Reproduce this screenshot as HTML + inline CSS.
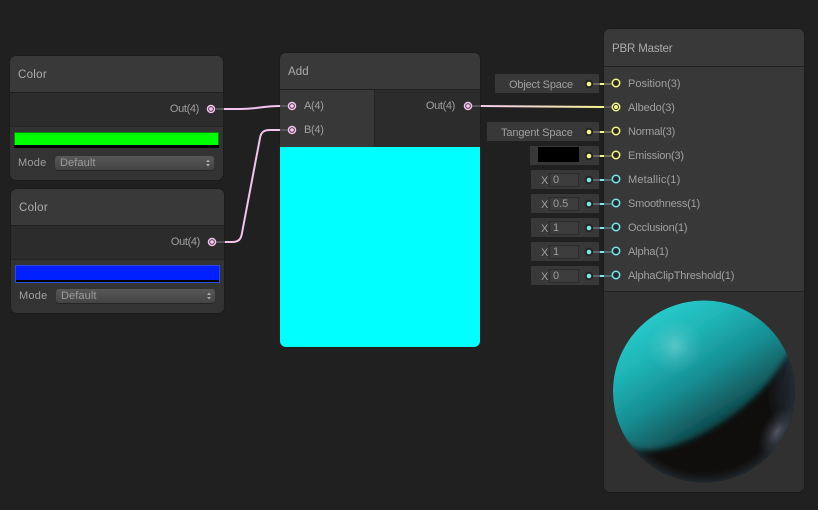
<!DOCTYPE html>
<html><head><meta charset="utf-8"><style>
html,body{margin:0;padding:0;background:#202020;width:818px;height:510px;overflow:hidden}
body{position:relative;font-family:"Liberation Sans",sans-serif;font-size:11px;color:#a0a0a0}
.a{position:absolute}
.node{position:absolute;background:#2c2c2c;border-radius:6px;box-shadow:0 0 0 1px #1c1c1c;overflow:hidden}
.hd{position:absolute;left:0;right:0;top:0;background:#393939;border-bottom:1px solid #1f1f1f;box-sizing:border-box}
.t{position:absolute;white-space:nowrap;line-height:14px;letter-spacing:-.15px}
.dd{position:absolute;height:14px;box-sizing:border-box;border-radius:3px;background:linear-gradient(#585858,#444);box-shadow:0 1px 0 #262626;color:#9c9c9c;padding-left:5px;line-height:15px;font-size:11px;letter-spacing:.1px}
.chip{position:absolute;background:#383838;height:19px}
.inp{position:absolute;background:#3c3c3c;border:1px solid #2c2c2c;box-sizing:border-box;height:14px;width:30px;color:#9c9c9c;line-height:13px;padding-left:3px}
.ttl{font-size:11.5px;color:#acacac;letter-spacing:-.1px}
</style></head><body>

<div class="node" style="left:10px;top:56px;width:213px;height:124px;background:#333">
 <div class="hd" style="height:37px"></div>
 <div class="a" style="left:0;right:0;top:37px;height:33px;background:#2c2c2c;border-bottom:1px solid #252525"></div>
 <div class="t ttl" style="left:8px;top:12px;letter-spacing:.3px">Color</div>
 <div class="t" style="right:24px;top:46px;letter-spacing:-.35px">Out(4)</div>
 <div class="a" style="left:4px;top:76px;width:205px;height:14px;background:#00ff00;box-sizing:border-box;border:1px solid #0a8a0a;border-bottom:0"></div>
 <div class="a" style="left:4px;top:89px;width:205px;height:3px;background:#000"></div>
 <div class="t" style="left:8px;top:100px;letter-spacing:.25px">Mode</div>
 <div class="dd" style="left:45px;top:100px;width:159px">Default</div>
 <svg class="a" style="left:194px;top:102px" width="8" height="10"><path d="M4 1.500L6 4H2zM4 8.500L6 6H2z" fill="#aaa"/></svg>
</div>

<div class="node" style="left:11px;top:189px;width:213px;height:124px;background:#333">
 <div class="hd" style="height:37px"></div>
 <div class="a" style="left:0;right:0;top:37px;height:33px;background:#2c2c2c;border-bottom:1px solid #252525"></div>
 <div class="t ttl" style="left:8px;top:12px;letter-spacing:.3px">Color</div>
 <div class="t" style="right:24px;top:46px;letter-spacing:-.35px">Out(4)</div>
 <div class="a" style="left:4px;top:76px;width:205px;height:15px;background:#0020ff;box-sizing:border-box;border:1px solid #2a4ae0;border-bottom:0"></div>
 <div class="a" style="left:4px;top:91px;width:203px;height:2px;background:#000;border:solid #2a4ae0;border-width:0 1px 1px"></div>
 <div class="t" style="left:8px;top:100px;letter-spacing:.25px">Mode</div>
 <div class="dd" style="left:45px;top:100px;width:159px">Default</div>
 <svg class="a" style="left:194px;top:102px" width="8" height="10"><path d="M4 1.500L6 4H2zM4 8.500L6 6H2z" fill="#aaa"/></svg>
</div>

<div class="node" style="left:280px;top:53px;width:200px;height:294px">
 <div class="hd" style="height:37px"></div>
 <div class="a" style="left:0;top:37px;width:94px;height:57px;background:#383838;border-right:1px solid #242424"></div>
 <div class="a" style="left:0;top:94px;width:200px;height:200px;background:#00ffff"></div>
 <div class="t ttl" style="left:8px;top:12px;letter-spacing:.1px">Add</div>
 <div class="t" style="left:24px;top:46px;letter-spacing:-.3px">A(4)</div>
 <div class="t" style="left:24px;top:70px;letter-spacing:-.3px">B(4)</div>
 <div class="t" style="right:25px;top:46px;letter-spacing:-.35px">Out(4)</div>
</div>

<div class="node" style="left:604px;top:29px;width:200px;height:463px;background:#303030">
 <div class="hd" style="height:38px"></div>
 <div class="a" style="left:0;right:0;top:38px;height:224px;background:#383838;border-bottom:1px solid #232323"></div>
 <div class="t ttl" style="left:8px;top:13px;letter-spacing:-.15px">PBR Master</div>
 <div class="t" style="left:24px;top:48px;letter-spacing:0">Position(3)</div>
 <div class="t" style="left:24px;top:72px;letter-spacing:-.1px">Albedo(3)</div>
 <div class="t" style="left:24px;top:96px;letter-spacing:-.2px">Normal(3)</div>
 <div class="t" style="left:24px;top:120px;letter-spacing:-.2px">Emission(3)</div>
 <div class="t" style="left:24px;top:144px;letter-spacing:.15px">Metallic(1)</div>
 <div class="t" style="left:24px;top:168px;letter-spacing:-.2px">Smoothness(1)</div>
 <div class="t" style="left:24px;top:192px;letter-spacing:-.2px">Occlusion(1)</div>
 <div class="t" style="left:24px;top:216px;letter-spacing:-.15px">Alpha(1)</div>
 <div class="t" style="left:24px;top:240px;letter-spacing:-.15px">AlphaClipThreshold(1)</div>
</div>

<div class="chip" style="left:495px;top:74px;width:104px"></div>
<div class="t" style="left:509px;top:78px;letter-spacing:-.17px">Object Space</div>
<div class="chip" style="left:487px;top:122px;width:112px"></div>
<div class="t" style="left:501px;top:126px;letter-spacing:-.13px">Tangent Space</div>
<div class="chip" style="left:530px;top:146px;width:69px"></div>
<div class="a" style="left:538px;top:147px;width:41px;height:15px;background:#000"></div>

<div class="chip" style="left:531px;top:170px;width:68px"></div>
<div class="t" style="left:541px;top:174px">X</div><div class="inp" style="left:549px;top:173px">0</div>
<div class="chip" style="left:531px;top:194px;width:68px"></div>
<div class="t" style="left:541px;top:198px">X</div><div class="inp" style="left:549px;top:197px">0.5</div>
<div class="chip" style="left:531px;top:218px;width:68px"></div>
<div class="t" style="left:541px;top:222px">X</div><div class="inp" style="left:549px;top:221px">1</div>
<div class="chip" style="left:531px;top:242px;width:68px"></div>
<div class="t" style="left:541px;top:246px">X</div><div class="inp" style="left:549px;top:245px">1</div>
<div class="chip" style="left:531px;top:266px;width:68px"></div>
<div class="t" style="left:541px;top:270px">X</div><div class="inp" style="left:549px;top:269px">0</div>

<svg class="a" style="left:0;top:0" width="818" height="510" viewBox="0 0 818 510">
 <defs>
  <linearGradient id="pk" gradientUnits="userSpaceOnUse" x1="481" y1="0" x2="604" y2="0"><stop offset="0" stop-color="#f4c4ee"/><stop offset=".45" stop-color="#f4dcc8"/><stop offset="1" stop-color="#f5f58c"/></linearGradient>
  <clipPath id="sph"><circle cx="704" cy="391.500" r="91"/></clipPath>
  <linearGradient id="lit" gradientUnits="userSpaceOnUse" x1="650" y1="310" x2="723" y2="429">
   <stop offset="0" stop-color="#28cccc"/><stop offset=".3" stop-color="#1fb4b6"/><stop offset=".6" stop-color="#168e92"/><stop offset=".85" stop-color="#125e62"/><stop offset="1" stop-color="#0d3e42"/>
  </linearGradient>
  <radialGradient id="spec" gradientUnits="userSpaceOnUse" cx="675" cy="346" r="28">
   <stop offset="0" stop-color="#78d0d0" stop-opacity=".65"/><stop offset=".5" stop-color="#78d0d0" stop-opacity=".22"/><stop offset="1" stop-color="#78d0d0" stop-opacity="0"/>
  </radialGradient>
  <radialGradient id="rim" gradientUnits="userSpaceOnUse" cx="704" cy="391.500" r="91">
   <stop offset=".88" stop-color="#1a2028" stop-opacity="0"/><stop offset="1" stop-color="#26323a" stop-opacity=".7"/>
  </radialGradient>
  <radialGradient id="rim2" gradientUnits="userSpaceOnUse" cx="0" cy="0" r="1" gradientTransform="translate(777 432) rotate(-60) scale(28 15)">
   <stop offset="0" stop-color="#646876" stop-opacity=".8"/><stop offset=".5" stop-color="#4a505e" stop-opacity=".4"/><stop offset="1" stop-color="#3a4250" stop-opacity="0"/>
  </radialGradient>
  <filter id="bl" x="-10%" y="-10%" width="120%" height="120%"><feGaussianBlur stdDeviation="3"/></filter>
  <filter id="bl2" x="-50%" y="-50%" width="200%" height="200%"><feGaussianBlur stdDeviation="7"/></filter>
 </defs>

 <g fill="none" stroke-width="2">
  <path d="M224 109H240C258 109 262 106 280 106H287" stroke="#f4c4ee"/>
  <path d="M224 242H232C239 242 241 239 242 233L260 138C261 132 264 130 270 130H287" stroke="#f4c4ee"/>
  <path d="M481 106L604 107" stroke="url(#pk)"/>
 </g>
 <g stroke="#555" stroke-width="2" fill="none">
  <path d="M216 109H224M216 242H225M280 106H288M280 130H288M472 106H481M604 107H612"/>
  <path d="M592 84H612M592 132H612M592 156H612" stroke="#6a6a50"/>
  <path d="M592 180H612M592 204H612M592 228H612M592 252H612M592 276H612" stroke="#4f6a6a"/>
 </g>
 <g stroke="#f5f58c" stroke-width="2" fill="none"><path d="M600 84H604M600 132H604M600 156H604"/></g>
 <g stroke="#7fe6e6" stroke-width="2" fill="none"><path d="M600 180H604M600 204H604M600 228H604M600 252H604M600 276H604"/></g>

 <g fill="#3a2c38" stroke="#f4c4ee" stroke-width="1.500">
  <circle cx="211" cy="109" r="3.500"/><circle cx="212" cy="242" r="3.500"/>
  <circle cx="292" cy="106" r="3.500"/><circle cx="292" cy="130" r="3.500"/>
  <circle cx="468" cy="106" r="3.500"/>
 </g>
 <g fill="#f4c4ee"><circle cx="211" cy="109" r="1.900"/><circle cx="212" cy="242" r="1.900"/><circle cx="292" cy="106" r="1.900"/><circle cx="292" cy="130" r="1.900"/><circle cx="468" cy="106" r="1.900"/></g>

 <g fill="#2a2a22" stroke="#f5f58c" stroke-width="1.500">
  <circle cx="616" cy="83" r="3.700"/><circle cx="616" cy="107" r="3.700"/><circle cx="616" cy="131" r="3.700"/><circle cx="616" cy="155" r="3.700"/>
 </g>
 <circle cx="616" cy="107" r="2" fill="#f5f58c"/>
 <g fill="#222c2c" stroke="#7fe6e6" stroke-width="1.500">
  <circle cx="616" cy="179" r="3.700"/><circle cx="616" cy="203" r="3.700"/><circle cx="616" cy="227" r="3.700"/><circle cx="616" cy="251" r="3.700"/><circle cx="616" cy="275" r="3.700"/>
 </g>
 <g fill="#232323"><circle cx="589" cy="84" r="4.200"/><circle cx="589" cy="132" r="4.200"/><circle cx="589" cy="156" r="4.200"/><circle cx="589" cy="180" r="4.200"/><circle cx="589" cy="204" r="4.200"/><circle cx="589" cy="228" r="4.200"/><circle cx="589" cy="252" r="4.200"/><circle cx="589" cy="276" r="4.200"/></g>
 <g fill="#f5f58c"><circle cx="589" cy="84" r="2.300"/><circle cx="589" cy="132" r="2.300"/><circle cx="589" cy="156" r="2.300"/></g>
 <g fill="#7fe6e6"><circle cx="589" cy="180" r="2.300"/><circle cx="589" cy="204" r="2.300"/><circle cx="589" cy="228" r="2.300"/><circle cx="589" cy="252" r="2.300"/><circle cx="589" cy="276" r="2.300"/></g>

 <g clip-path="url(#sph)">
  <rect x="610" y="298" width="190" height="190" fill="#100e0d"/>
  <ellipse cx="798" cy="390" rx="22" ry="45" fill="#1c222c" filter="url(#bl2)"/>
  <circle cx="704" cy="391.500" r="91" fill="url(#rim)"/>
  <ellipse cx="777" cy="432" rx="30" ry="30" fill="url(#rim2)"/>
  <path d="M600 290H792V345C788 355 782 364 770 380C745 412 690 448 650 450C640 451 634 449 628 444L600 420Z" fill="url(#lit)" filter="url(#bl)"/>
  <circle cx="675" cy="346" r="28" fill="url(#spec)"/>
 </g>
</svg>
</body></html>
